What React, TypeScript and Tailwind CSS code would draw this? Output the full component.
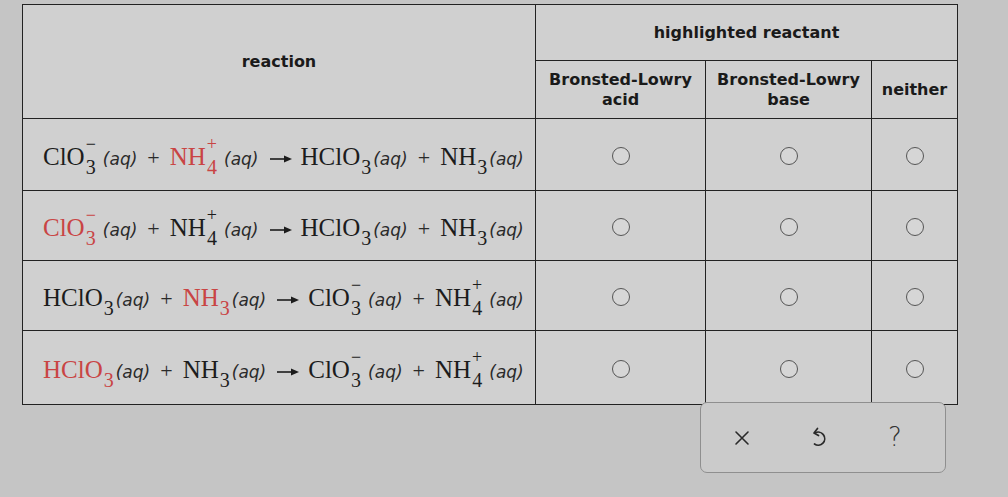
import React from "react";

interface Sp {
  f: string;
  sub?: string;
  sup?: string;
  red?: boolean;
  gap?: boolean;
}

const ClO3: Sp = { f: "ClO", sub: "3", sup: "−", gap: true };
const NH4: Sp = { f: "NH", sub: "4", sup: "+", gap: true };
const HClO3: Sp = { f: "HClO", sub: "3" };
const NH3: Sp = { f: "NH", sub: "3" };

const rows: [Sp, Sp, Sp, Sp][] = [
  [ClO3, { ...NH4, red: true }, HClO3, NH3],
  [{ ...ClO3, red: true }, NH4, HClO3, NH3],
  [HClO3, { ...NH3, red: true }, ClO3, NH4],
  [{ ...HClO3, red: true }, NH3, ClO3, NH4],
];

function Species({ s }: { s: Sp }) {
  return (
    <span className="whitespace-nowrap">
      <span className={s.red ? "text-[#c94444]" : "text-[#1c1c1c]"}>
        {s.f}
        <span className="inline-flex flex-col items-center align-[15px] ml-[1px]">
          <span className="h-[24px] text-[18px] leading-[22px]">{s.sup ?? "\u00a0"}</span>
          <span className="text-[20px] leading-[20px]">{s.sub}</span>
        </span>
      </span>
      <span
        className={`font-['DejaVu_Sans',sans-serif] italic text-[17px] text-[#2a2a2a] ${
          s.gap ? "ml-[7px]" : "ml-[2px]"
        }`}
      >
        (aq)
      </span>
    </span>
  );
}

function Plus() {
  return <span className="mx-[10px] text-[22px] text-[#2a2a2a]">+</span>;
}

function Arrow() {
  return (
    <svg width="24" height="10" viewBox="0 0 24 10" className="ml-[10px] mr-[8px] inline-block align-middle">
      <line x1="1" y1="5" x2="17" y2="5" stroke="#1c1c1c" strokeWidth="1.6" />
      <path d="M15 1.5 L23 5 L15 8.5 Z" fill="#1c1c1c" />
    </svg>
  );
}

function RadioCell() {
  return (
    <td className="border-[1.5px] border-[#222] p-0">
      <div className="flex items-center justify-center pt-[2px]">
        <span className="h-[18px] w-[18px] rounded-full border-[1.5px] border-[#555] bg-[#d6d6d6]" />
      </div>
    </td>
  );
}

export default function App() {
  return (
    <div className="min-h-screen w-full bg-[#c5c5c5] pl-[22px] pt-[4px] font-['DejaVu_Sans',sans-serif]">
      <table className="border-collapse bg-[#d0d0d0] text-[#1a1a1a]">
        <tbody>
          <tr className="h-[56px]">
            <th
              rowSpan={2}
              className="w-[513px] border-[1.5px] border-[#222] text-[16px] font-bold"
            >
              reaction
            </th>
            <th colSpan={3} className="border-[1.5px] border-[#222] text-[16px] font-bold">
              highlighted reactant
            </th>
          </tr>
          <tr className="h-[58px]">
            <th className="w-[170px] border-[1.5px] border-[#222] text-[16px] font-bold leading-[20px]">
              Bronsted-Lowry
              <br />
              acid
            </th>
            <th className="w-[166px] border-[1.5px] border-[#222] text-[16px] font-bold leading-[20px]">
              Bronsted-Lowry
              <br />
              base
            </th>
            <th className="w-[86px] border-[1.5px] border-[#222] text-[16px] font-bold">
              neither
            </th>
          </tr>
          {rows.map((r, i) => (
            <tr key={i} className={i === 0 ? "h-[72px]" : i === 3 ? "h-[74px]" : "h-[70px]"}>
              <td className="border-[1.5px] border-[#222] pl-[20px] font-['Liberation_Serif',serif] text-[25px] leading-[30px] whitespace-nowrap">
                <Species s={r[0]} />
                <Plus />
                <Species s={r[1]} />
                <Arrow />
                <Species s={r[2]} />
                <Plus />
                <Species s={r[3]} />
              </td>
              <RadioCell />
              <RadioCell />
              <RadioCell />
            </tr>
          ))}
        </tbody>
      </table>
      <div className="flex w-[935px] justify-end pr-[11px]">
        <div className="-mt-[3px] flex h-[71px] w-[246px] items-center gap-[60px] rounded-[7px] border-[1.5px] border-[#8f8f8f] bg-[#cbcbcb] pl-[33px]">
          <svg width="16" height="16" viewBox="0 0 16 16">
            <path d="M2 2 L14 14 M14 2 L2 14" stroke="#2a2a2a" strokeWidth="1.6" strokeLinecap="round" />
          </svg>
          <svg width="18" height="22" viewBox="0 0 18 22">
            <path
              d="M5 6 A6.5 6.5 0 1 1 4.5 17"
              fill="none"
              stroke="#2a2a2a"
              strokeWidth="1.7"
              strokeLinecap="round"
            />
            <path d="M7.5 1.5 L4 6 L8.5 8.5" fill="none" stroke="#2a2a2a" strokeWidth="1.7" strokeLinecap="round" strokeLinejoin="round" />
          </svg>
          <span className="font-['DejaVu_Sans',sans-serif] text-[26px] font-light text-[#333]">?</span>
        </div>
      </div>
    </div>
  );
}
